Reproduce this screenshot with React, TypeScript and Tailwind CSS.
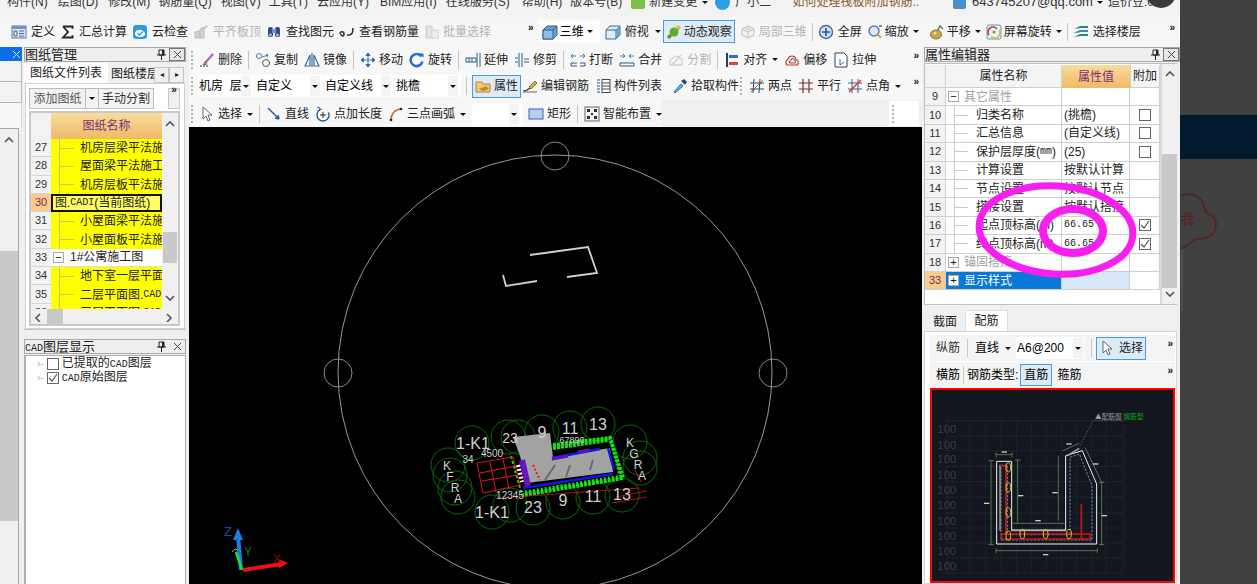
import React from "react";

type P = { children?: React.ReactNode };
const S = ({ children }: P) => (
  <svg width="16" height="16" viewBox="0 0 16 16" fill="none" className="shrink-0">{children}</svg>
);

const icons: Record<string, React.ReactNode> = {
  define: <><rect x="1" y="2" width="14" height="12" fill="#dfe8f5" stroke="#5b7aa8" /><rect x="1" y="2" width="14" height="3" fill="#6f93c6" /><path d="M8 7h5M8 9.5h5M8 12h5M3 7h3v5H3z" stroke="#44628f" /></>,
  sigma: <path d="M3 2.5h9.5v2.2M3 2.5 8 8l-5 5.5h9.5v-2.2" stroke="#222" strokeWidth="1.8" />,
  cloud: <><rect x="1" y="1" width="14" height="14" rx="3" fill="#2f9be6" /><path d="M3 10c0-3 3-5 6-4s4 2 4 4-2 3-5 3-5-1-5-3z" fill="#fff" /><path d="m5.5 9 2 2 3.5-3.5" stroke="#2f9be6" strokeWidth="1.4" /></>,
  level: <><path d="M2 14V8l5-1v7zM7 14V5l4-2v11z" fill="#d2d2d2" stroke="#bdbdbd" /><path d="M10 5l4-3" stroke="#c4c4c4" strokeWidth="2" /></>,
  find: <><rect x="2" y="3" width="5" height="10" rx="2" fill="#2e4f86" /><rect x="9" y="3" width="5" height="10" rx="2" fill="#2e4f86" /><rect x="6" y="5" width="4" height="4" fill="#7a94bd" /><circle cx="4.5" cy="11" r="1.4" fill="#9fc0ea" /><circle cx="11.5" cy="11" r="1.4" fill="#9fc0ea" /></>,
  rebarView: <path d="M1 10c0-3 4-3 4 0s-3 2-3 0M8 11h2c3 0 4-2 4-7" stroke="#333" strokeWidth="1.6" />,
  batch: <><rect x="2" y="2" width="6" height="12" fill="#e2e2e2" stroke="#c8c8c8" /><path d="M8 6h6v8H8M10 8h2M10 11h2" stroke="#c8c8c8" /></>,
  cube: <><path d="M1 6l4-4h10v9l-4 4H1z" fill="#6fa3cf" stroke="#2f5f8f" /><path d="M1 6h10v9H1z" fill="#8fbce0" stroke="#2f5f8f" /><path d="M11 6l4-4" stroke="#2f5f8f" /></>,
  top: <><path d="M1 6l4-4h10v9l-4 4H1z" fill="#dcecf8" stroke="#3a6a96" /><path d="M1 6h10v9M11 6l4-4" stroke="#3a6a96" /><path d="M11 6l4-4v9l-4 4z" fill="#6fa3cf" /></>,
  orbit: <><path d="M2 14 14 3" stroke="#555" strokeWidth="2" /><circle cx="8" cy="8" r="4.5" fill="#5fae2e" /><circle cx="12" cy="3.5" r="2" fill="#e7c62d" /><circle cx="3.5" cy="12.5" r="2" fill="#7d7d3a" /></>,
  local: <path d="M8 2l6 3v6l-6 3-6-3V5zM2 5l6 3 6-3M8 8v6M5 3.5l6 3" stroke="#cdcdcd" strokeWidth="1.4" />,
  full: <><circle cx="8" cy="8" r="6.5" fill="#cfe0f2" stroke="#46698f" strokeWidth="1.4" /><path d="M8 4v8M4 8h8" stroke="#29578c" strokeWidth="1.6" /></>,
  zoom: <><circle cx="7" cy="7" r="5" fill="#dce8f5" stroke="#5c7ea4" strokeWidth="1.4" /><path d="m10.5 10.5 3.5 3" stroke="#d0a030" strokeWidth="2" /><path d="M12 2h3" stroke="#3c7f32" strokeWidth="1.5" /></>,
  pan: <><ellipse cx="7" cy="10.5" rx="5.5" ry="4.5" fill="#c8a44a" stroke="#8a7034" /><path d="M9 6l2-4 3 3" stroke="#50844a" strokeWidth="1.5" /><circle cx="6" cy="9" r="1.5" fill="#f0dfa8" /></>,
  rotate: <><rect x="1" y="1" width="14" height="14" rx="2" fill="#eaf4fb" stroke="#4f9ac9" /><path d="M3 11a5 5 0 0 1 8-6" stroke="#d73a2a" strokeWidth="1.6" /><path d="M13 6a5 5 0 0 1-8 6" stroke="#e9b92d" strokeWidth="1.6" /><circle cx="8" cy="8" r="1.5" fill="#4fa24f" /></>,
  floor: <><path d="M1 5l6-3h8v2H8zM1 9l6-3h8v2H8zM1 13l6-3h8v2H8z" fill="#1f8a8a" /><path d="M1 9l6-3h8v2H8z" fill="#4b7fc0" /></>,
  del: <><path d="M1 14h8" stroke="#333" strokeDasharray="2 1" /><path d="M6 11 14 2" stroke="#a06fc4" strokeWidth="2.4" /><path d="M4 13l2-3 2 2z" fill="#e2b24a" stroke="#8a6a2a" /></>,
  copy: <><circle cx="4" cy="4" r="2.5" stroke="#5b7aa8" /><circle cx="11" cy="11" r="3.5" stroke="#555" /><path d="m7 5 6-2M11 2l2 1-1 2" stroke="#5b7aa8" /></>,
  mirror: <path d="M8 1v14M1 14 6 3v11zM15 14 10 3v11z" stroke="#3f6c9e" strokeWidth="1.2" />,
  move: <path d="M8 1v14M1 8h14M8 1 6 3.5h4zM8 15l-2-2.5h4zM1 8l2.5-2v4zM15 8l-2.5-2v4z" stroke="#2a70b0" fill="#2a70b0" />,
  spin: <><path d="M12.5 4.5a6 6 0 1 0 1 5" stroke="#2a70c0" strokeWidth="2.6" /><path d="M9.5 1.5h5v4z" fill="#2a70c0" /></>,
  extend: <path d="M12 1v14M15 1v14M1 6h10v4H1zM4 6v4M7 6v4" stroke="#2c5f90" />,
  trim: <path d="M5 1v14M8 1v14M1 6h3M1 10h3M10 7h5M10 10h5" stroke="#2c5f90" />,
  brk: <><path d="M1 11h6M10 11h5M1 14h6M10 14h5M1 11v3M15 11v3" stroke="#2c5f90" /><path d="M1 4h5M3 2 1 4l2 2M15 4h-5M13 2l2 2-2 2" stroke="#2a80d0" /></>,
  join: <><path d="M1 11h14M1 14h14M1 11v3M15 11v3" stroke="#2c5f90" /><path d="M1 4h5M4 2l2 2-2 2M15 4h-5M12 2l-2 2 2 2" stroke="#2a80d0" /></>,
  split: <path d="M2 13h12V7L8 4 2 8zM4 13 13 3" stroke="#cfcfcf" strokeWidth="1.3" />,
  align: <><path d="M3 1v14" stroke="#1a3f78" strokeWidth="2" /><rect x="5" y="3" width="9" height="3" fill="#2f6fb4" /><rect x="5" y="10" width="9" height="3" fill="#d04a3a" /></>,
  offset: <path d="M3 13c-2-2-1-5 1-6 1-4 7-4 8 0 3 1 3 6 0 6zM6 11c-1-1 0-3 1-3 .5-2 3-2 3.5 0 1.5.5 1 3 0 3z" stroke="#b5443c" strokeWidth="1.2" fill="#f4f4f4" />,
  stretch: <><path d="M2 1h9l3 3v11H2z" stroke="#345" fill="#fff" /><path d="M7 7v6M7 13l4-3" stroke="#2a70b0" /></>,
  prop: <><path d="M1 4h6l1 2h7v8H1z" fill="#f2c77a" stroke="#b5863a" /><path d="M4 11l7-3 3 3-6 2z" fill="#c08a2a" /></>,
  editbar: <><path d="M1 13c3 0 5-1 7-3" stroke="#444" strokeWidth="1.4" /><path d="M7 9 13 3l2 2-6 6z" fill="#d9b04a" stroke="#8a6a2a" /><path d="M1 14h14" stroke="#a05030" /></>,
  list: <><path d="M2 2h3M2 5h3M2 8h3M2 11h3M2 14h3" stroke="#6a8ab0" strokeWidth="1.5" /><rect x="7" y="1.5" width="8" height="13" fill="#fff" stroke="#4a4a4a" /><path d="M7 5h8M7 8h8M7 11h8" stroke="#4a4a4a" /></>,
  pick: <><path d="M2 14 9 6l2 2-8 7z" fill="#6fb0e8" stroke="#2f6aa8" /><path d="M9 3l4 4 2-3-3-3z" fill="#204f88" /></>,
  two: <><path d="M1 5h14M1 11h14M5 1 4 15M11 1l-1 14" stroke="#234f80" /><path d="M2 14 14 2" stroke="#2aa02a" /><circle cx="4.5" cy="11" r="1.2" fill="#d33" /><circle cx="11" cy="5" r="1.2" fill="#d33" /></>,
  par: <path d="M1 5h14M1 11h14M5 1v14M11 1v14" stroke="#7a2d3a" strokeWidth="1.2" />,
  ang: <><path d="M1 5h14M1 11h14M5 1v14M11 1v14" stroke="#3d5f8d" /><path d="M2 14 14 2" stroke="#d33" strokeWidth="1.4" /></>,
  pointer: <path d="M4 1v12l3-3 2 5 2-1-2-5h4z" fill="#fff" stroke="#667" />,
  line: <path d="M2 2 13 13M13 13l-1-4M13 13l-4-1" stroke="#2c5f90" strokeWidth="1.5" />,
  addlen: <><circle cx="8" cy="9" r="6" stroke="#2c5f90" strokeWidth="1.4" strokeDasharray="26 8" /><path d="M8 6v6M5 9h6" stroke="#222" /><path d="M2 1l3 1-1 3" stroke="#2c5f90" /></>,
  arc: <><path d="M3 14C3 8 7 3 13 3" stroke="#d0653a" strokeWidth="1.6" /><circle cx="3" cy="14" r="1.3" fill="#222" /><circle cx="13" cy="3" r="1.3" fill="#222" /></>,
  rect: <rect x="1" y="3" width="14" height="10" fill="#b8cdf0" stroke="#3d62a8" />,
  smart: <><rect x="1" y="1" width="14" height="14" fill="#f5f5f5" stroke="#666" /><path d="M3 3h3v3H3zM10 3h3v3h-3zM3 10h3v3H3zM10 10h3v3h-3zM7 7h2v2H7z" fill="#234" /></>,
};

const Ic = ({ n }: { n: string }) => <S>{icons[n]}</S>;

const Caret = () => (
  <span className="inline-block w-0 h-0 border-l-[3px] border-r-[3px] border-t-[3px] border-l-transparent border-r-transparent border-t-[#111] shrink-0" />
);
const Sep = () => <span className="w-px h-[18px] bg-[#c6c6c6] shrink-0" />;
const Grip = () => (
  <span className="flex flex-col gap-[2px] w-[2px] shrink-0">
    {[0, 1, 2, 3, 4].map((i) => <span key={i} className="w-[2px] h-[2px] bg-[#b5b5b5]" />)}
  </span>
);
const More = () => <span className="text-[10px] leading-none font-bold text-[#111] -mt-2">»</span>;

const Tool = ({ i, t, caret, off, on, gap, cls }: { i?: string; t: string; caret?: boolean; off?: boolean; on?: boolean; gap?: string; cls?: string }) => (
  <div className={`flex items-center h-[23px] shrink-0 ${gap ?? "gap-[3px]"} ${on ? "border border-[#4d9ad8] bg-[#dcebf7] px-[2px]" : ""} ${off ? "text-[#b4b4b4]" : "text-[#222]"} ${cls ?? ""}`}>
    {i && <Ic n={i} />}
    <span className="whitespace-nowrap">{t}</span>
    {caret && <span className="ml-[2px] flex"><Caret /></span>}
  </div>
);

const Combo = ({ t, w }: { t: string; w: string }) => (
  <div className={`flex items-center justify-between h-[22px] bg-white pl-[1px] pr-[3px] shrink-0 ${w}`}>
    <span className="whitespace-pre overflow-hidden">{t}</span>
    <span className="w-[10px] h-[20px] bg-[#f3f3f3] flex items-center justify-center"><Caret /></span>
  </div>
);

const M = ({ children }: P) => <span className="font-['Liberation_Mono',monospace] text-[10px]">{children}</span>;

const PinClose = ({ boxed }: { boxed?: boolean }) => (
  <div className="flex items-center h-full ml-auto shrink-0">
    <span className="w-[16px] flex justify-center">
      <svg width="9" height="11" viewBox="0 0 9 11"><path d="M2 1h5v5H2zM0 6h9M4.5 6v5" stroke="#222" fill="none" /><path d="M5 1h2v5H5z" fill="#222" /></svg>
    </span>
    <span className={`w-[16px] h-[13px] flex items-center justify-center ${boxed ? "border border-[#777] bg-[#e6e6e6]" : ""}`}>
      <svg width="9" height="9" viewBox="0 0 9 9"><path d="M1 1l7 7M8 1 1 8" stroke="#444" /></svg>
    </span>
  </div>
);

const PanelHead = ({ t, boxed }: { t: React.ReactNode; boxed?: boolean }) => (
  <div className="h-[15px] flex items-center border border-[#a8a8a8] bg-[#efefef] text-[#222] text-[13px] leading-none overflow-hidden shrink-0">
    <span className="whitespace-nowrap">{t}</span>
    <PinClose boxed={boxed} />
  </div>
);

const Chk = ({ on }: { on?: boolean }) => (
  <span className="w-[12px] h-[12px] border border-[#666] bg-white flex items-center justify-center shrink-0">
    {on && <svg width="10" height="10" viewBox="0 0 10 10"><path d="M1 5l3 3 5-7" stroke="#555" fill="none" strokeWidth="1.2" /></svg>}
  </span>
);

const Expander = ({ t }: { t: "+" | "-" }) => (
  <span className="w-[11px] h-[11px] border border-[#aaa] bg-white flex items-center justify-center text-[#111] text-[11px] leading-none shrink-0">
    {t === "+" ? "+" : "−"}
  </span>
);

const drawingRows: { n: string; t: React.ReactNode; kind?: string; last?: boolean }[] = [
  { n: "27", t: "机房层梁平法施工图" },
  { n: "28", t: "屋面梁平法施工图" },
  { n: "29", t: "机房层板平法施工图" },
  { n: "30", t: <>图.<M>CADI</M>(当前图纸)</>, kind: "cur" },
  { n: "31", t: "小屋面梁平法施工图" },
  { n: "32", t: "小屋面板平法施工图", last: true },
  { n: "33", t: <>1#公寓施工图</>, kind: "group" },
  { n: "34", t: "地下室一层平面图" },
  { n: "35", t: <>二层平面图.<M>CADI</M></> },
  { n: "36", t: <>三层平面图.<M>CADI</M></> },
];

const DrawingRow = ({ r }: { r: (typeof drawingRows)[number] }) => (
  <div className="flex h-[18.3px] shrink-0 text-[12px] leading-none">
    <div className={`w-[20px] flex items-center justify-center border-b border-[#d5d5d5] text-[11px] ${r.kind === "cur" ? "bg-[#fbcb8c] text-[#7a2a5a]" : "bg-[#f2f2f2] text-[#333]"}`}>{r.n}</div>
    {r.kind === "cur" ? (
      <div className="w-[111px] flex items-center pl-[2px] bg-[#ffff60] border-2 border-[#111] whitespace-nowrap overflow-hidden text-[#222]">{r.t}</div>
    ) : r.kind === "group" ? (
      <div className="w-[111px] flex items-center pl-[2px] gap-[6px] bg-white border-b border-[#ddd] whitespace-nowrap overflow-hidden text-[#222]"><Expander t="-" />{r.t}</div>
    ) : (
      <div className="w-[111px] flex items-center bg-[#ffff00] whitespace-nowrap overflow-hidden text-[#222]">
        <span className="w-px h-full bg-[#c8c860] ml-[8px] shrink-0" />
        <span className="w-[14px] h-px bg-[#c8c860] mr-[6px] shrink-0" />
        {r.t}
      </div>
    )}
  </div>
);

const props: { n: string; t: React.ReactNode; v?: React.ReactNode; c?: boolean; on?: boolean; kind?: string }[] = [
  { n: "9", t: "其它属性", kind: "groupM" },
  { n: "10", t: "归类名称", v: "(挑檐)", c: true },
  { n: "11", t: "汇总信息", v: "(自定义线)", c: true },
  { n: "12", t: <>保护层厚度(<M>mm</M>)</>, v: "(25)", c: true },
  { n: "13", t: "计算设置", v: "按默认计算" },
  { n: "14", t: "节点设置", v: "按默认节点" },
  { n: "15", t: "搭接设置", v: "按默认搭接" },
  { n: "16", t: "起点顶标高(m)", v: <M>66.65</M>, c: true, on: true },
  { n: "17", t: "终点顶标高(m)", v: <M>66.65</M>, c: true, on: true },
  { n: "18", t: "锚固搭接", kind: "groupP" },
  { n: "33", t: "显示样式", kind: "sel" },
];

const PropRow = ({ r }: { r: (typeof props)[number] }) => {
  const sel = r.kind === "sel";
  const group = r.kind === "groupM" || r.kind === "groupP";
  return (
    <div className="flex h-[18.4px] shrink-0 leading-none text-[12px]">
      <div className={`w-[21px] flex items-center justify-center border-r border-b border-[#cfcfcf] text-[11px] ${sel ? "bg-[#fbcb8c] text-[#7a2a5a]" : "bg-[#f2f2f2] text-[#333]"}`}>{r.n}</div>
      <div className={`w-[116px] flex items-center border-r border-b border-[#cfcfcf] overflow-hidden whitespace-nowrap ${sel ? "bg-[#0a78d8] text-white" : group ? "text-[#a0a0a0] bg-white" : "text-[#222] bg-white"}`}>
        {group || sel ? (
          <span className="flex items-center gap-[5px] pl-[2px]"><Expander t={r.kind === "groupM" ? "-" : "+"} />{r.t}</span>
        ) : (
          <>
            <span className="w-px h-full bg-[#c8c8c8] ml-[8px] shrink-0" />
            <span className="w-[13px] h-px bg-[#c8c8c8] mr-[8px] shrink-0" />
            {r.t}
          </>
        )}
      </div>
      <div className={`w-[68px] flex items-center pl-[2px] border-r border-b border-[#cfcfcf] whitespace-nowrap overflow-hidden text-[#222] ${sel ? "bg-[#d6e8f7]" : "bg-white"}`}>{r.v}</div>
      <div className="w-[30px] flex items-center justify-center border-r border-b border-[#cfcfcf] bg-white">{r.c && <Chk on={r.on} />}</div>
    </div>
  );
};

const Chevron = ({ d }: { d: "up" | "down" | "left" | "right" }) => {
  const p = { up: "M1 6l4-4 4 4", down: "M1 2l4 4 4-4", left: "M6 1 2 5l4 4", right: "M2 1l4 4-4 4" }[d];
  return <svg width="10" height="10" viewBox="0 0 10 8" className="shrink-0"><path d={p} stroke="#555" strokeWidth="1.6" fill="none" /></svg>;
};

const CadCanvas = () => {
  const circles = [[472, 443], [508, 437], [518, 437], [542, 432], [570, 428], [598, 424], [630, 442], [640, 458], [640, 468], [448, 465], [450, 475], [455, 488], [458, 497], [492, 512], [533, 508], [563, 502], [593, 497], [622, 495], [510, 505]];
  const labels: [string, number, number, number][] = [["1-K1", 473, 449, 16], ["23", 510, 443, 14], ["9", 542, 438, 16], ["11", 570, 434, 16], ["13", 598, 430, 16], ["K", 630, 447, 12], ["G", 634, 458, 12], ["R", 638, 469, 12], ["A", 642, 480, 12], ["K", 447, 470, 12], ["F", 450, 481, 12], ["R", 455, 492, 12], ["A", 458, 503, 12], ["1-K1", 492, 518, 16], ["23", 533, 513, 16], ["9", 563, 506, 16], ["11", 593, 502, 16], ["13", 622, 500, 16], ["34", 468, 463, 10], ["4500", 492, 457, 10], ["67890", 572, 443, 9], ["12345", 510, 499, 10]];
  return (
    <svg viewBox="189 127 733 457" className="block w-full h-full" fill="none">
      <circle cx="555" cy="372" r="217" stroke="#a8a8a8" strokeWidth="0.9" />
      <circle cx="555" cy="156" r="14" stroke="#999" strokeWidth="0.9" />
      <circle cx="338" cy="373" r="14" stroke="#999" strokeWidth="0.9" />
      <circle cx="773" cy="373" r="14" stroke="#999" strokeWidth="0.9" />
      <path d="M530 255 588 247 597 273 567 277M537 281 506 286 503 275" stroke="#d0d0d0" strokeWidth="1.8" />
      {circles.map(([x, y], i) => <circle key={i} cx={x} cy={y} r="17" stroke="#0a6a0a" strokeWidth="1" />)}
      <path d="M513 437 550 433 553 457 610 448 613 472 527 483 520 456z" fill="#a2a2a2" />
      <path d="M553 445 610 438 623 478 523 495M553 448 608 440" stroke="#18e018" strokeWidth="4" strokeDasharray="3 1" />
      <path d="M525 492 622 476M612 444 620 476" stroke="#18e018" strokeWidth="3" strokeDasharray="2 2" />
      <path d="M511 456 522 495" stroke="#18e018" strokeWidth="2" strokeDasharray="3 2" />
      <path d="M523 488 613 474M614 470 608 448M552 458 600 449" stroke="#1414e8" strokeWidth="2.5" />
      <path d="M522 460 528 486" stroke="#6a14c0" strokeWidth="6" />
      <path d="M518 465 522 482" stroke="#fff" strokeWidth="4" strokeDasharray="2 2" />
      <path d="M552 459 568 456M578 452 590 450" stroke="#5a14c0" strokeWidth="3" />
      <path d="M533 465 540 480" stroke="#e02020" strokeWidth="2" strokeDasharray="2 2" />
      <path d="M545 480 555 465M566 477 570 465M590 470 593 460" stroke="#6a6a6a" strokeWidth="2" />
      <path d="M477 463 513 457 520 485 483 493zM480 473 516 466M482 481 518 475" stroke="#e01818" strokeWidth="1" />
      <path d="M490 462 496 492M503 459 509 489" stroke="#e01818" />
      <path d="M500 498 640 488M612 503 647 497M616 497 647 491" stroke="#b81818" strokeWidth="0.9" />
      <path d="M635 470 641 482" stroke="#c01818" />
      {labels.map(([t, x, y, s], i) => (
        <text key={i} x={x} y={y} fontSize={s} textAnchor="middle" fill="#cfcfcf" fontFamily="Liberation Sans">{t}</text>
      ))}
      <path d="M241 570 238 536" stroke="#1b7fe8" strokeWidth="4" />
      <path d="M238 528 233 540h10z" fill="#1b7fe8" />
      <path d="M242 570 236 552" stroke="#22e022" strokeWidth="2.5" />
      <path d="M232 552l3-3 3 1" stroke="#22e022" />
      <path d="M243 570 282 564" stroke="#f01010" strokeWidth="4" />
      <path d="M288 563 278 559l1 9z" fill="#f01010" />
      <text x="224" y="536" fontSize="13" fill="#124f9c" fontFamily="Liberation Sans">Z</text>
      <text x="244" y="556" fontSize="12" fill="#0b7a0b" fontFamily="Liberation Sans">Y</text>
      <text x="273" y="563" fontSize="12" fill="#7a0a0a" fontFamily="Liberation Sans">X</text>
    </svg>
  );
};

const RebarFigure = () => {
  const ys = [350, 397, 440, 487, 533, 580, 627, 672, 717, 762, 808];
  const xs = [80, 150, 197, 243, 290, 335, 380, 425, 470, 515, 560, 610];
  return (
    <svg viewBox="36 258 723 579" preserveAspectRatio="xMidYMin slice" className="block w-full h-full" fill="none">
      {ys.map((y) => <path key={y} d={`M80 ${y}H610`} stroke="#33363d" strokeDasharray="5 3" strokeWidth="2" />)}
      {xs.map((x) => <path key={x} d={`M${x} 350V808`} stroke="#2b2e35" strokeDasharray="5 3" strokeWidth="2" />)}
      {[388, 434, 478, 524, 570, 616, 662, 708, 752, 798].map((y) => (
        <text key={y} x="52" y={y} fontSize="34" fill="#3a3d44" fontFamily="Liberation Sans">100</text>
      ))}
      <path d="M230 720H530V540L487 440 437 455V680H275V472H230z" stroke="#f0f0f0" strokeWidth="3" />
      <path d="M243 708H516V545L478 450 450 460V692H262V484H243z" stroke="#9cc8e8" strokeWidth="2" strokeDasharray="7 4" />
      <path d="M240 482V680M275 678H435M442 455 478 433" stroke="#a8a8a8" strokeWidth="4" />
      <path d="M258 485V690M245 690H510V705H245zM484 600V705M240 485H258" stroke="#c81818" strokeWidth="5" />
      {[[265, 490], [265, 550], [265, 625], [265, 695], [307, 690], [377, 690], [447, 690]].map(([x, y], i) => (
        <ellipse key={i} cx={x} cy={y} rx="7" ry="14" stroke="#e6c21c" strokeWidth="3" />
      ))}
      <path d="M213 470V722M205 470H222M205 722H222M228 452H276M228 445V460M276 445V460M293 468V655M285 468H302M278 658H438M415 455V650M228 740H532M228 733V748M532 733V748M545 535V722M537 722H553M537 535H553M428 440 478 418M495 430 545 535" stroke="#70a860" strokeWidth="2" />
      <path d="M480 425 520 350H610" stroke="#777" strokeWidth="2" strokeDasharray="5 4" />
      {[[200, 598], [302, 575], [405, 566], [354, 650], [377, 752], [553, 635], [527, 480], [253, 444], [447, 420]].map(([x, y], i) => (
        <rect key={i} x={x - 8} y={y - 2} width="16" height="4" fill="#cfcfcf" />
      ))}
      <text x="525" y="345" fontSize="20" fill="#9a9a9a" fontFamily="Noto Sans CJK SC">▲配筋图</text>
      <text x="610" y="345" fontSize="20" fill="#0fa80f" fontFamily="Noto Sans CJK SC">钢筋型</text>
    </svg>
  );
};

export default function App() {
  return (
    <div className="relative w-[1257px] h-[584px] overflow-hidden flex bg-[#404040] text-[12px] font-['Liberation_Sans','Noto_Sans_CJK_SC',sans-serif]">
      <div className="w-[1180px] h-full flex flex-col bg-[#f0f0f0] shrink-0">
        {/* menu */}
        <div className="h-[17px] overflow-hidden shrink-0 bg-[#f2f2f2]">
          <div className="flex items-center h-[14px] -mt-[5px] text-[#333] whitespace-nowrap">
            <span className="ml-[7px]">构件(N)</span>
            <span className="ml-[10px]">绘图(D)</span>
            <span className="ml-[10px]">修改(M)</span>
            <span className="ml-[8px]">钢筋量(Q)</span>
            <span className="ml-[9px]">视图(V)</span>
            <span className="ml-[8px]">工具(T)</span>
            <span className="ml-[9px]">云应用(Y)</span>
            <span className="ml-[11px]">BIM应用(I)</span>
            <span className="ml-[9px]">在线服务(S)</span>
            <span className="ml-[12px]">帮助(H)</span>
            <span className="ml-[8px]">版本号(B)</span>
            <span className="ml-[9px] w-[14px] h-[14px] bg-[#7cc04a] rounded-[2px] shrink-0" />
            <span className="ml-[4px]">新建变更</span>
            <span className="ml-[5px] flex"><Caret /></span>
            <span className="ml-[7px] w-[15px] h-[15px] rounded-full bg-[#2d9be8] shrink-0" />
            <span className="ml-[5px]">广小二</span>
            <span className="ml-[21px] text-[#8a5a2a]">如何处理筏板附加钢筋..</span>
            <span className="ml-[34px] w-[13px] h-[13px] rounded-[2px] bg-[#4a90c8] shrink-0" />
            <span className="ml-[6px] text-[13px]">643745207@qq.com</span>
            <span className="ml-[4px] flex"><Caret /></span>
            <span className="ml-[5px]">造价豆:0</span>
          </div>
        </div>
        {/* main toolbar */}
        <div className="h-[30px] flex items-center shrink-0 pl-[11px] pr-[3px] pb-[1px] gap-[5px] bg-[#f6f6f6]">
          <Tool i="define" t="定义" gap="gap-[4px]" />
          <Tool i="sigma" t="汇总计算" gap="gap-[3px]" />
          <Tool i="cloud" t="云检查" gap="gap-[4px]" />
          <Tool i="level" t="平齐板顶" off gap="gap-[4px]" />
          <Tool i="find" t="查找图元" gap="gap-[4px]" />
          <Tool i="rebarView" t="查看钢筋量" gap="gap-[4px]" />
          <Tool i="batch" t="批量选择" off gap="gap-[3px]" />
          <span className="ml-[32px] flex"><More /></span>
          <div className="flex items-center h-[23px] bg-white gap-[2px] pl-[3px] pr-[3px] shrink-0">
            <Ic n="cube" /><span className="whitespace-nowrap">三维</span><span className="ml-[1px] w-[10px] flex"><Caret /></span>
          </div>
          <Tool i="top" t="俯视" caret gap="gap-[4px]" />
          <Tool i="orbit" t="动态观察" on gap="gap-[2px]" cls="-ml-[3px]" />
          <Tool i="local" t="局部三维" off gap="gap-[3px]" />
          <Sep />
          <Tool i="full" t="全屏" gap="gap-[4px]" />
          <Tool i="zoom" t="缩放" caret gap="gap-[2px]" />
          <Tool i="pan" t="平移" caret gap="gap-[2px]" cls="ml-[5px]" />
          <Tool i="rotate" t="屏幕旋转" caret gap="gap-[2px]" />
          <Sep />
          <Tool i="floor" t="选择楼层" gap="gap-[4px]" />
          <span className="ml-auto flex mr-[2px]"><More /></span>
        </div>
        {/* body */}
        <div className="flex-1 flex min-h-0">
          {/* collapsed left stub */}
          <div className="w-[22px] flex flex-col shrink-0">
            <div className="h-[14px] bg-[#0a6fe8] flex items-center justify-end pr-[1px] shrink-0">
              <svg width="9" height="9" viewBox="0 0 9 9"><path d="M1 1l7 7M8 1 1 8" stroke="#d8e8ff" /></svg>
            </div>
            <div className="h-[21px] border-b border-r border-[#b5b5b5] bg-[#f2f2f2] shrink-0" />
            <div className="h-[21px] border-b border-r border-[#b5b5b5] bg-[#f2f2f2] shrink-0" />
            <div className="h-[25px] border-r border-[#d8d8d8] bg-[#f7f7f7] shrink-0" />
            <div className="flex-1 flex flex-col border-t border-r border-[#a8a8a8] w-[19px]">
              <div className="h-[22px] flex items-center justify-center shrink-0"><Chevron d="up" /></div>
              <div className="h-[100px] shrink-0" />
              <div className="h-[270px] bg-[#c9c9c9] shrink-0" />
            </div>
          </div>
          {/* left panels */}
          <div className="w-[162px] ml-[2px] mr-[3px] flex flex-col shrink-0">
            <PanelHead t="图纸管理" boxed />
            <div className="h-[268px] border-b border-[#c4c4c4] flex flex-col shrink-0">
              <div className="flex items-end h-[21px] text-[12px] text-[#222] shrink-0">
                <div className="w-[84px] h-[20px] bg-white flex items-center justify-center">图纸文件列表</div>
                <div className="w-[46px] h-[19px] overflow-hidden whitespace-nowrap pl-[3px] flex items-center">图纸楼层</div>
                <div className="w-[15px] h-[16px] border border-[#c4c4c4] flex items-center justify-center text-[8px] leading-none">◂</div>
                <div className="w-[15px] h-[16px] border border-[#c4c4c4] flex items-center justify-center text-[8px] leading-none">▸</div>
              </div>
              <div className="flex-1 bg-white mx-[1px] border border-[#d0d0d0] flex flex-col pl-[3px] pr-[4px] pt-[4px] min-h-0">
                <div className="flex h-[21px] items-stretch text-[#333] shrink-0">
                  <div className="w-[57px] border border-[#bcbcbc] bg-[#f2f2f2] flex items-center justify-center text-[#555]">添加图纸</div>
                  <div className="w-[12px] border-y border-[#bcbcbc] bg-[#f2f2f2] flex items-center justify-center"><Caret /></div>
                  <div className="w-[56px] border border-[#bcbcbc] bg-[#f2f2f2] flex items-center justify-center">手动分割</div>
                  <div className="ml-auto w-[12px] h-[21px] border border-[#c8c8c8] bg-[#f0f0f0] flex justify-center pt-[4px]"><More /></div>
                </div>
                <div className="flex-1 mt-[2px] border-2 border-[#c8c8c8] flex flex-col min-h-0 mb-[2px]">
                  <div className="flex-1 flex min-h-0">
                    <div className="w-[131px] flex flex-col overflow-hidden">
                      <div className="flex h-[26px] shrink-0">
                        <div className="w-[20px] bg-[#f2f2f2]" />
                        <div className="w-[111px] bg-gradient-to-b from-[#f9dc9d] to-[#efb968] flex items-center justify-center text-[#7a2d72]">图纸名称</div>
                      </div>
                      {drawingRows.map((r) => <DrawingRow key={r.n} r={r} />)}
                    </div>
                    <div className="flex-1 bg-[#f0f0f0] flex flex-col items-center py-[6px]">
                      <Chevron d="up" />
                      <div className="mt-[103px] w-[14px] h-[31px] bg-[#c9c9c9]" />
                      <div className="mt-auto"><Chevron d="down" /></div>
                    </div>
                  </div>
                  <div className="h-[15px] bg-[#f0f0f0] flex items-center px-[3px] shrink-0">
                    <Chevron d="left" />
                    <div className="ml-[3px] w-[16px] h-[15px] bg-[#c9c9c9]" />
                    <div className="ml-auto"><Chevron d="right" /></div>
                  </div>
                </div>
              </div>
            </div>
            <div className="h-[9px] shrink-0" />
            <PanelHead t={<><M>CAD</M>图层显示</>} />
            <div className="flex-1 mt-[1px] border-l-2 border-t border-[#b0b0b0] border-r bg-white pt-[1px] pl-[11px] text-[#222] leading-[14px]">
              <div className="flex items-center h-[14px] gap-[3px]"><span className="text-[#aaa] text-[10px]">›-</span><Chk /><span>已提取的<M>CAD</M>图层</span></div>
              <div className="flex items-center h-[14px] gap-[3px]"><span className="text-[#aaa] text-[10px]">›-</span><Chk on /><span><M>CAD</M>原始图层</span></div>
            </div>
          </div>
          {/* center */}
          <div className="w-[733px] flex flex-col shrink-0">
            <div className="h-[25px] flex items-center gap-[6px] pl-[2px] bg-[#f7f7f7] shrink-0">
              <Grip />
              <Tool i="del" t="删除" />
              <Sep />
              <Tool i="copy" t="复制" />
              <Tool i="mirror" t="镜像" />
              <Sep />
              <Tool i="move" t="移动" />
              <Tool i="spin" t="旋转" />
              <Sep />
              <Tool i="extend" t="延伸" />
              <Tool i="trim" t="修剪" />
              <Sep />
              <Tool i="brk" t="打断" />
              <Tool i="join" t="合并" />
              <Tool i="split" t="分割" off />
              <Sep />
              <Tool i="align" t="对齐" caret />
              <Tool i="offset" t="偏移" />
              <Tool i="stretch" t="拉伸" />
              <span className="ml-auto mr-[3px] flex"><More /></span>
            </div>
            <div className="h-[28px] flex items-center pl-[2px] gap-[1px] bg-[#f7f7f7] shrink-0">
              <Grip />
              <span className="w-[3px]" />
              <Combo t="机房  层" w="w-[56px]" />
              <Combo t="自定义" w="w-[68px]" />
              <Combo t="自定义线" w="w-[70px]" />
              <Combo t="挑檐" w="w-[66px]" />
              <span className="w-[3px]" /><Sep /><span className="w-[3px]" />
              <Tool i="prop" t="属性" on />
              <Tool i="editbar" t="编辑钢筋" />
              <span className="w-[4px]" />
              <Tool i="list" t="构件列表" />
              <span className="w-[8px]" />
              <Tool i="pick" t="拾取构件" />
              <Grip /><span className="w-[5px]" />
              <Tool i="two" t="两点" />
              <span className="w-[4px]" />
              <Tool i="par" t="平行" />
              <span className="w-[4px]" />
              <Tool i="ang" t="点角" caret />
              <span className="ml-auto mr-[3px] flex"><More /></span>
            </div>
            <div className="h-[27px] flex items-center shrink-0">
              <div className="h-full w-[473px] flex items-center pt-[1px] pl-[2px] gap-[6px] bg-[#f7f7f7]">
                <Grip />
                <Tool i="pointer" t="选择" caret />
                <Sep />
                <Tool i="line" t="直线" />
                <Tool i="addlen" t="点加长度" />
                <Tool i="arc" t="三点画弧" caret />
                <Combo t="" w="w-[50px]" />
                <Tool i="rect" t="矩形" />
                <Sep />
                <Tool i="smart" t="智能布置" caret />
              </div>
              <div className="ml-auto mr-[3px] w-[30px] h-[25px] bg-white flex items-center pl-[3px]"><Grip /></div>
            </div>
            <div className="flex-1 bg-black min-h-0"><CadCanvas /></div>
          </div>
          {/* right */}
          <div className="w-[256px] ml-[2px] flex flex-col shrink-0">
            <PanelHead t="属性编辑器" boxed />
            <div className="h-[242px] mt-[1px] mr-[3px] border border-[#c0c0c0] bg-white flex shrink-0">
              <div className="w-[236px] flex flex-col">
                <div className="flex h-[23px] shrink-0 text-[#222] mt-[1px]">
                  <div className="w-[21px] bg-[#f2f2f2] border-r border-b border-[#cfcfcf]" />
                  <div className="w-[116px] bg-[#f4f4f4] border-r border-b border-[#cfcfcf] flex items-center justify-center">属性名称</div>
                  <div className="w-[68px] bg-gradient-to-b from-[#f9dc9d] to-[#efb968] flex items-center justify-center text-[#7a2d72]">属性值</div>
                  <div className="w-[30px] bg-[#f4f4f4] border-x border-b border-[#cfcfcf] flex items-center justify-center">附加</div>
                </div>
                {props.map((r) => <PropRow key={r.n} r={r} />)}
              </div>
              <div className="flex-1 flex flex-col items-center pt-[5px] pb-[5px] bg-[#f0f0f0] border-l-2 border-[#d8d8d8]">
                <Chevron d="up" />
                <div className="mt-[75px] w-[15px] h-[134px] bg-[#c9c9c9]" />
                <div className="mt-auto"><Chevron d="down" /></div>
              </div>
            </div>
            <div className="h-[5px] shrink-0" />
            <div className="flex h-[21px] items-end text-[#222] pl-[1px] shrink-0">
              <div className="w-[40px] h-[18px] flex items-center justify-center">截面</div>
              <div className="w-[43px] h-[21px] bg-white border-t border-x border-[#ddd] flex items-center justify-center">配筋</div>
            </div>
            <div className="flex-1 mr-[3px] border border-[#d5d5d5] bg-white flex flex-col min-h-0">
              <div className="h-[26px] mt-[3px] ml-[5px] mr-[1px] flex items-center gap-[7px] bg-[#f4f4f4] pl-[6px] shrink-0">
                <span className="text-[#333] whitespace-nowrap">纵筋</span>
                <Sep />
                <span className="whitespace-nowrap">直线</span>
                <span className="-ml-[1px] flex"><Caret /></span>
                <div className="w-[68px] -ml-[2px] h-[22px] bg-white flex items-center justify-between pl-[1px] pr-[1px] shrink-0">
                  <span>A6@200</span><span className="w-[10px] h-[20px] bg-[#f3f3f3] flex items-center justify-center"><Caret /></span>
                </div>
                <Sep />
                <Tool i="pointer" t="选择" on gap="gap-[4px]" cls="-ml-[3px]" />
                <span className="ml-auto mr-[2px] flex"><More /></span>
              </div>
              <div className="h-[25px] mt-[1px] ml-[5px] mr-[1px] flex items-center bg-[#f4f4f4] pl-[6px] gap-[2px] shrink-0">
                <span className="whitespace-nowrap">横筋</span>
                <span className="mx-[1px] flex"><Sep /></span>
                <span className="whitespace-nowrap">钢筋类型:</span>
                <span className="border border-[#4d9ad8] bg-[#dcebf7] px-[3px] h-[22px] flex items-center whitespace-nowrap">直筋</span>
                <span className="ml-[3px] whitespace-nowrap">箍筋</span>
                <span className="ml-auto mr-[2px] flex"><More /></span>
              </div>
              <div className="flex-1 mt-[1px] ml-[5px] mr-[1px] border-2 border-[#ff0000] bg-[#13161e] min-h-0 overflow-hidden">
                <RebarFigure />
              </div>
            </div>
          </div>
        </div>
      </div>
      {/* backdrop to the right of the window */}
      <div className="flex-1 flex flex-col">
        <div className="h-[115px] shrink-0" />
        <div className="h-[44px] bg-[#021a30] shrink-0" />
        <div className="h-[34px] shrink-0" />
        <svg width="77" height="120" viewBox="0 0 77 120" fill="none" className="shrink-0">
          <path d="M0 3C10 -1 22 2 24 14c1 4 2 6 4 7 8 2 10 10 6 18-3 6-10 7-18 7-5 4-10 8-16 10" stroke="#5a1c1c" strokeWidth="1.5" />
          <text x="1" y="30" fontSize="13" fill="#5a1c1c" fontFamily="Noto Sans CJK SC">我</text>
          <path d="M2 56V120" stroke="#5a5a5a" />
        </svg>
      </div>
      {/* overlays */}
      <span className="absolute left-[1146px] -top-[22px] w-[30px] h-[30px] rounded-full bg-[#3a3a3a]" />
      <svg className="absolute left-0 top-0 pointer-events-none" width="1257" height="584" fill="none">
        <ellipse cx="1056" cy="230" rx="77" ry="44" transform="rotate(4 1056 230)" stroke="#f71ff0" strokeWidth="7" />
        <ellipse cx="1073" cy="231" rx="30" ry="22" stroke="#f71ff0" strokeWidth="8" />
      </svg>
    </div>
  );
}
